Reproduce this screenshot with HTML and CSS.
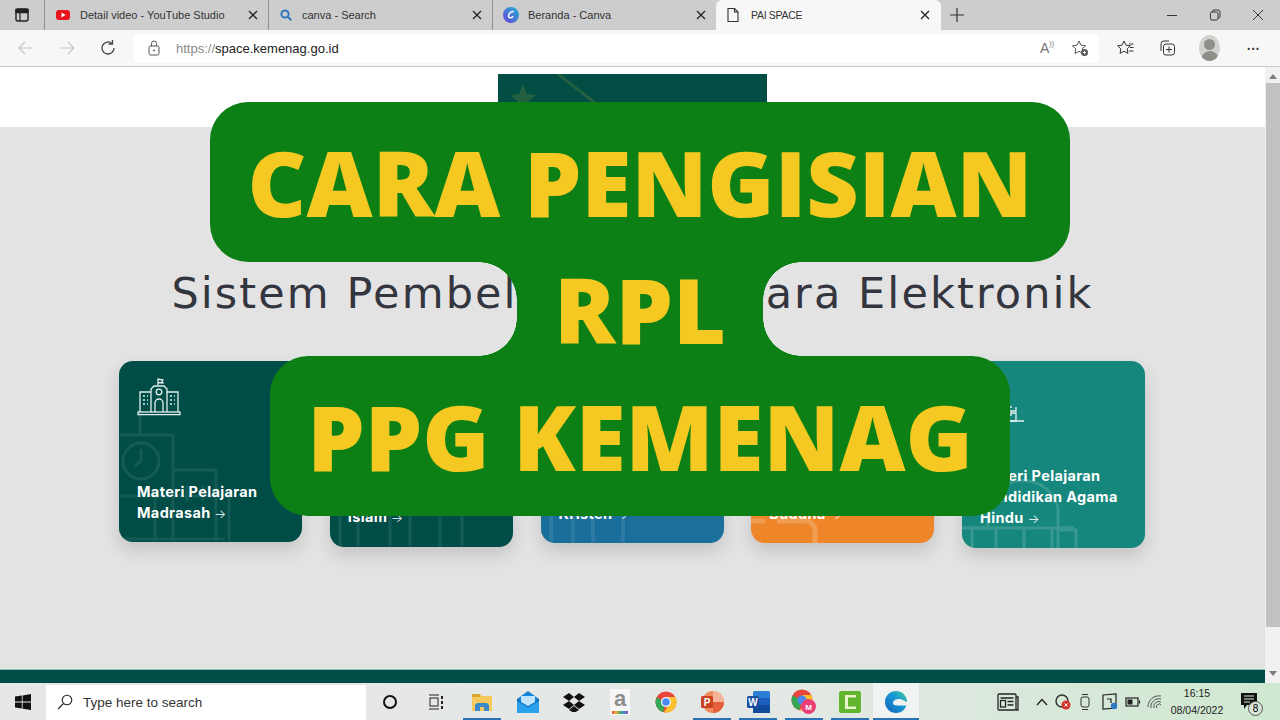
FILE: index.html
```html
<!DOCTYPE html>
<html>

<head>
    <title>PAI SPACE</title>
    <meta name="viewport" content="width=device-width, initial-scale=1.0">
    <link rel="stylesheet" href="styles.css">
</head>

<body>
    <!-- Browser tabs -->
    <div class="tabstrip">
        <div class="tab-actions">
            <svg width="16" height="16" viewBox="0 0 16 16" fill="none" stroke="#222" stroke-width="1.4">
                <rect x="2" y="2" width="12" height="12" rx="2"></rect>
                <path d="M2 5.5h12M6 5.5V14" stroke-width="1.2"></path>
                <path d="M2 2.5h12v3H2z" fill="#222"></path>
            </svg>
        </div>
        <div class="tab">
            <svg class="favicon" width="16" height="16" viewBox="0 0 16 16">
                <rect x="1" y="3" width="14" height="10" rx="3" fill="#e8141c"></rect>
                <path d="M6.5 5.6v4.8L10.6 8z" fill="#fff"></path>
            </svg>
            <span class="tab-title">Detail video - YouTube Studio</span>
            <svg class="tab-close" width="10" height="10" viewBox="0 0 10 10" stroke="#222" stroke-width="1.3"><path d="M1 1l8 8M9 1L1 9"></path></svg>
        </div>
        <div class="tab">
            <svg class="favicon" width="14" height="14" viewBox="0 0 14 14" fill="none" stroke="#2f75bb" stroke-width="2">
                <circle cx="6" cy="6" r="3.6"></circle>
                <path d="M8.8 8.8L12.4 12.4"></path>
            </svg>
            <span class="tab-title">canva - Search</span>
            <svg class="tab-close" width="10" height="10" viewBox="0 0 10 10" stroke="#222" stroke-width="1.3"><path d="M1 1l8 8M9 1L1 9"></path></svg>
        </div>
        <div class="tab tab-last">
            <svg class="favicon" width="16" height="16" viewBox="0 0 16 16">
                <defs>
                    <linearGradient id="canva" x1="0" y1="1" x2="1" y2="0">
                        <stop offset="0" stop-color="#6b3fd8"></stop>
                        <stop offset="1" stop-color="#1fb6d4"></stop>
                    </linearGradient>
                </defs>
                <circle cx="8" cy="8" r="8" fill="url(#canva)"></circle>
                <path d="M10.6 5.2C9.6 3.6 6.2 5.4 5.6 8.4c-.5 2.6 2 3.2 4.6 1" fill="none" stroke="#fff" stroke-width="1.4"></path>
            </svg>
            <span class="tab-title">Beranda - Canva</span>
            <svg class="tab-close" width="10" height="10" viewBox="0 0 10 10" stroke="#222" stroke-width="1.3"><path d="M1 1l8 8M9 1L1 9"></path></svg>
        </div>
        <div class="tab tab-active">
            <svg class="favicon" width="16" height="16" viewBox="0 0 16 16" fill="none" stroke="#333" stroke-width="1.1">
                <path d="M3 1.5h6.5L13 5v9.5H3z"></path>
                <path d="M9.5 1.5V5H13"></path>
            </svg>
            <span class="tab-title">PAI SPACE</span>
            <svg class="tab-close" width="10" height="10" viewBox="0 0 10 10" stroke="#222" stroke-width="1.3"><path d="M1 1l8 8M9 1L1 9"></path></svg>
        </div>
        <svg class="new-tab" width="14" height="14" viewBox="0 0 14 14" stroke="#333" stroke-width="1.2"><path d="M7 0v14M0 7h14"></path></svg>
        <div class="window-controls">
            <svg width="12" height="12" viewBox="0 0 12 12" stroke="#333" stroke-width="1"><path d="M1 6.5h10"></path></svg>
            <svg width="12" height="12" viewBox="0 0 12 12" fill="none" stroke="#333" stroke-width="1"><rect x="1.5" y="3" width="7.5" height="8" rx="1.5"></rect><path d="M3.5 3V2.5A1.5 1.5 0 0 1 5 1h4a2 2 0 0 1 2 2v4.500A1.500 1.500 0 0 1 9 9"></path></svg>
            <svg width="12" height="12" viewBox="0 0 12 12" stroke="#333" stroke-width="1"><path d="M1 1l10 10M11 1L1 11"></path></svg>
        </div>
    </div>

    <!-- Address bar -->
    <div class="toolbar">
        <svg class="nav-icon" width="18" height="18" viewBox="0 0 18 18" fill="none" stroke="#c6c6c6" stroke-width="1.2"><path d="M16 9H2M8 3L2 9l6 6"></path></svg>
        <svg class="nav-icon" width="18" height="18" viewBox="0 0 18 18" fill="none" stroke="#c6c6c6" stroke-width="1.2"><path d="M2 9h14M10 3l6 6-6 6"></path></svg>
        <svg class="nav-icon" width="18" height="18" viewBox="0 0 18 18" fill="none" stroke="#444" stroke-width="1.3"><path d="M15 9a6 6 0 1 1-2-4.500"></path><path d="M13.500 1v4h-4"></path></svg>
        <div class="address">
            <svg class="lock" width="12" height="16" viewBox="0 0 12 16" fill="none" stroke="#555" stroke-width="1"><rect x="1" y="6" width="10" height="9" rx="1.500"></rect><path d="M3.500 6V3.500a2.500 2.500 0 0 1 5 0V6"></path><circle cx="6" cy="10.500" r=".6" fill="#555"></circle></svg>
            <span class="url"><span class="url-scheme">https://</span>space.kemenag.go.id</span>
            <div class="address-icons">
                <span class="read-aloud">A<small>))</small></span>
                <svg width="18" height="18" viewBox="0 0 18 18" fill="none" stroke="#555" stroke-width="1"><path d="M8 2l2 4.200 4.500.6-3.300 3.100.8 4.600L8 12.300 4 14.500l.8-4.600L1.500 6.800 6 6.200z"></path><circle cx="13.500" cy="13.500" r="3.500" fill="#555" stroke="none"></circle><path d="M13.500 11.800v3.400M11.800 13.500h3.400" stroke="#fff"></path></svg>
            </div>
        </div>
        <div class="toolbar-icons">
            <svg width="18" height="18" viewBox="0 0 18 18" fill="none" stroke="#333" stroke-width="1"><path d="M7 2l2 4.200 4.300.6-3.100 3 .7 4.600L7 12.200 3.100 14.400l.7-4.600-3.100-3L5 6.200z"></path><path d="M12 5h4.500M13 8.500h3.500M12 12h4.500"></path></svg>
            <svg width="18" height="18" viewBox="0 0 18 18" fill="none" stroke="#333" stroke-width="1"><path d="M3 12V5a3 3 0 0 1 3-3h5"></path><rect x="5.500" y="5" width="11" height="11" rx="2.500"></rect><path d="M11 7.500v6M8 10.500h6"></path></svg>
            <div class="avatar"><span class="avatar-head"></span><span class="avatar-body"></span></div>
            <span class="dots">&#8226;&#8226;&#8226;</span>
        </div>
    </div>

    <div class="viewport">
        <div class="page">
            <header class="site-header">
                <div class="logo">
                    <svg width="269" height="53" viewBox="0 0 269 53" fill="none" stroke="#23603f" stroke-width="3">
                        <path d="M25 10l4 10 9 1-7 6 2 10-8-6-8 6 2-10-7-6 9-1z" fill="#23603f" stroke="none"></path>
                        <path d="M55 -4L106 36"></path>
                    </svg>
                </div>
            </header>

            <main class="site-main">
                <h1 class="site-title">Sistem Pembelajaran Secara Elektronik</h1>
                <div class="cards">
                    <a class="card card-madrasah">
                        <svg class="card-art" width="183" height="181" viewBox="0 0 183 181" fill="none" stroke="#fff" stroke-width="3">
                            <path d="M21 50v24M0 74h54v35h43v71M54 74v106M-2 178h108"></path>
                            <circle cx="22" cy="100" r="18"></circle>
                            <path d="M22 88v12l-6 5M68 125v15M84 125v15"></path>
                            <path d="M0 135h110v45M36 135v45"></path>
                        </svg>
                        <svg class="card-icon" width="44" height="38" viewBox="0 0 44 38" fill="none" stroke="#e4f0ee" stroke-width="1.300">
                            <path d="M21 7V1l5 1-1 1.500 1 1.500-5-.5"></path>
                            <path d="M14 34V11l3-3h10l3 3v23"></path>
                            <circle cx="22" cy="14" r="2.800"></circle>
                            <path d="M18 34v-9a4 4 0 0 1 8 0v9"></path>
                            <path d="M14 14H3v20M30 14h11v20"></path>
                            <path d="M6 18h2M10 18h1M6 22h2M10 22h1M6 26h2M10 26h1M33 18h2M37 18h1M33 22h2M37 22h1M33 26h2M37 26h1"></path>
                            <rect x="1" y="34" width="42" height="2.600"></rect>
                        </svg>
                        <span class="card-label">Materi Pelajaran Madrasah <span class="arrow">&#8594;</span></span>
                    </a>
                    <a class="card card-islam">
                        <svg class="card-art" width="183" height="186" viewBox="0 0 183 186" fill="none" stroke="#fff" stroke-width="3">
                            <path d="M10 150v36M28 140v46M60 140v46M80 140v46M110 140v46M132 150v36"></path>
                        </svg>
                        <span class="card-label">Materi Pelajaran Pendidikan Agama Islam <span class="arrow">&#8594;</span></span>
                    </a>
                    <a class="card card-kristen">
                        <svg class="card-art" width="183" height="182" viewBox="0 0 183 182" fill="none" stroke="#fff" stroke-width="4">
                            <path d="M10 140v42M32 140v42M52 140v42M82 140v42"></path>
                        </svg>
                        <span class="card-label">Materi Pelajaran Pendidikan Agama Kristen <span class="arrow">&#8594;</span></span>
                    </a>
                    <a class="card card-buddha">
                        <svg class="card-art" width="183" height="182" viewBox="0 0 183 182" fill="none" stroke="#fff" stroke-width="5">
                            <path d="M0 160h14M26 160h30a10 10 0 0 1 8 10v12"></path>
                        </svg>
                        <span class="card-label">Materi Pelajaran Pendidikan Agama Buddha <span class="arrow">&#8594;</span></span>
                    </a>
                    <a class="card card-hindu">
                        <svg class="card-art" width="183" height="187" viewBox="0 0 183 187" fill="none" stroke="#fff" stroke-width="3">
                            <path d="M10 187v-20h16v-20a36 36 0 0 1 70 0v20h16M34 167v20M62 167v20M90 167v20"></path>
                            <path d="M96 187v-18h18v18M0 167h112"></path>
                        </svg>
                        <svg class="card-icon card-icon-hindu" width="44" height="38" viewBox="0 0 44 38" fill="none" stroke="#e4f0ee" stroke-width="1.300">
                            <path d="M18 14h12M20 14l-2 6h12M32 20h-14v4h18v-4M31 26h5v8H22v-6h9z"></path>
                            <path d="M4 34h40"></path>
                        </svg>
                        <span class="card-label">Materi Pelajaran Pendidikan Agama Hindu <span class="arrow">&#8594;</span></span>
                    </a>
                </div>
            </main>

            <footer class="site-footer"></footer>
        </div>

        <div class="scrollbar">
            <span class="scroll-arrow scroll-up"></span>
            <span class="scroll-thumb"></span>
            <span class="scroll-arrow scroll-down"></span>
        </div>
    </div>

    <!-- Windows taskbar -->
    <div class="taskbar">
        <div class="start">
            <svg width="16" height="16" viewBox="0 0 16 16" fill="#111"><path d="M0 2.500l6.800-1v6H0zM7.600 1.400L16 0v7.500H7.600zM0 8.400h6.800v6.100L0 13.500zM7.600 8.400H16V16l-8.400-1.300z"></path></svg>
        </div>
        <div class="search">
            <svg width="16" height="16" viewBox="0 0 16 16" fill="none" stroke="#222" stroke-width="1.100"><circle cx="10" cy="6" r="4.800"></circle><path d="M6.500 9.500L1 15"></path></svg>
            <span>Type here to search</span>
        </div>
        <div class="task-items">
            <span class="task-item">
                <svg width="16" height="16" viewBox="0 0 16 16" fill="none" stroke="#111" stroke-width="2"><circle cx="8" cy="8" r="6"></circle></svg>
            </span>
            <span class="task-item">
                <svg width="18" height="18" viewBox="0 0 18 18" fill="none" stroke="#222" stroke-width="1"><path d="M2 2h10M2 16h10"></path><rect x="3" y="5" width="8" height="8"></rect><path d="M15 3v3M15 8v3M15 13v3" stroke-width="2"></path></svg>
            </span>
            <span class="task-item task-open">
                <svg width="22" height="20" viewBox="0 0 22 20"><path d="M1 2h8l2 2h10v15H1z" fill="#f5c95c"></path><path d="M1 2h8v3H1z" fill="#d9a72f"></path><path d="M6 11h10l2 2v6H4v-6z" fill="#3a8bc9"></path><path d="M9 15h4v4H9z" fill="#f5c95c"></path></svg>
            </span>
            <span class="task-item">
                <svg width="24" height="24" viewBox="0 0 24 24"><path d="M1 9L12 1l11 8v14H1z" fill="#1184d8"></path><path d="M1 9l11 8 11-8v1l-11 7L1 10z" fill="#0d5fa8"></path><path d="M5 6h14v6l-7 4-7-4z" fill="#bfe5fa"></path><path d="M1 11l11 7 11-7v12H1z" fill="#2ba3ec"></path></svg>
            </span>
            <span class="task-item">
                <svg width="22" height="20" viewBox="0 0 22 20" fill="#111"><path d="M6 1L0 5l6 4 5-4zM16 1l-5 4 5 4 6-4zM0 13l6 4 5-4-5-4zM16 9l-5 4 5 4 6-4zM6 18l5 3 5-3-5-4z"></path></svg>
            </span>
            <span class="task-item">
                <span class="amazon">a<i></i></span>
            </span>
            <span class="task-item">
                <svg width="22" height="22" viewBox="0 0 22 22"><circle cx="11" cy="11" r="10.500" fill="#e8453c"></circle><path d="M11 11L1.500 6.500A10.500 10.500 0 0 0 8 21z" fill="#36a853"></path><path d="M11 6h9.200A10.500 10.500 0 0 1 9 21.300L14 13z" fill="#fbc02d"></path><circle cx="11" cy="11" r="5" fill="#fff"></circle><circle cx="11" cy="11" r="3.800" fill="#4a8af4"></circle></svg>
            </span>
            <span class="task-item task-open">
                <svg width="24" height="22" viewBox="0 0 24 22"><circle cx="13" cy="11" r="11" fill="#f08a5d"></circle><path d="M13 0a11 11 0 0 1 11 11H13z" fill="#f4b49a"></path><path d="M13 11h11a11 11 0 0 1-11 11z" fill="#e65f3a"></path><rect x="1" y="5" width="12" height="12" rx="1.500" fill="#c8421f"></rect><text class="app-letter" x="7" y="14.500" text-anchor="middle">P</text></svg>
            </span>
            <span class="task-item task-open">
                <svg width="24" height="22" viewBox="0 0 24 22"><rect x="7" y="0" width="17" height="22" rx="1.500" fill="#2b7cd3"></rect><path d="M7 14h17v8H7z" fill="#124a9c"></path><path d="M7 7h17v7H7z" fill="#1b5ebe"></path><rect x="1" y="5" width="12" height="12" rx="1.500" fill="#1a4ea0"></rect><text class="app-letter" x="7" y="14.500" text-anchor="middle">W</text></svg>
            </span>
            <span class="task-item task-open">
                <svg width="26" height="26" viewBox="0 0 26 26"><circle cx="11" cy="11" r="10.500" fill="#e8453c"></circle><path d="M11 11L1.500 6.500A10.500 10.500 0 0 0 8 21z" fill="#36a853"></path><path d="M11 6h9.200A10.500 10.500 0 0 1 9 21.300L14 13z" fill="#fbc02d"></path><circle cx="11" cy="11" r="4.500" fill="#4a8af4"></circle><circle cx="17.500" cy="17.500" r="7.500" fill="#ea3f78"></circle><text class="app-letter app-letter-m" x="17.500" y="20.500" text-anchor="middle">M</text></svg>
            </span>
            <span class="task-item task-open">
                <svg width="22" height="22" viewBox="0 0 22 22"><rect width="22" height="22" rx="2" fill="#62b52c"></rect><path d="M6 4h11v2.500H9v9h8V18H6z" fill="#e8f5c8"></path></svg>
            </span>
            <span class="task-item task-open task-active">
                <svg width="22" height="22" viewBox="0 0 22 22">
                    <defs>
                        <linearGradient id="edge" x1="0" y1="1" x2="1" y2="0">
                            <stop offset="0" stop-color="#0f62b8"></stop>
                            <stop offset="0.6" stop-color="#1a9bd8"></stop>
                            <stop offset="1" stop-color="#43d08a"></stop>
                        </linearGradient>
                    </defs>
                    <circle cx="11" cy="11" r="11" fill="url(#edge)"></circle>
                    <path d="M8 11.500c.5-3.500 7-5 11-2 1.500 1 3 1.500 3 1.500v3.500H12c-2.500 0-4.200-1-4-3z" fill="#f0f3f1"></path>
                </svg>
            </span>
        </div>
        <div class="tray">
            <svg class="tray-news" width="22" height="18" viewBox="0 0 22 18" fill="none" stroke="#222" stroke-width="1.300"><rect x="1" y="1" width="18" height="16" rx="1"></rect><path d="M19 4h2v13h-2"></path><path d="M3.500 5h13M10.500 8.500h6M10.500 12h6"></path><rect x="3.500" y="7.500" width="5" height="6.500"></rect></svg>
            <svg class="tray-caret" width="12" height="8" viewBox="0 0 12 8" fill="none" stroke="#222" stroke-width="1.300"><path d="M1 7l5-5.500L11 7"></path></svg>
            <svg width="18" height="18" viewBox="0 0 18 18"><circle cx="8" cy="8" r="6" fill="none" stroke="#333" stroke-width="1.500"></circle><circle cx="12" cy="12" r="4.500" fill="#d9342b"></circle><path d="M10.500 10.500l3 3M13.500 10.500l-3 3" stroke="#fff"></path></svg>
            <svg class="tray-meet" width="14" height="18" viewBox="0 0 14 18" fill="none" stroke="#333" stroke-width="1"><rect x="3" y="4" width="8" height="10" rx="2"></rect><path d="M4 1.500h6M4 16.500h6"></path></svg>
            <svg width="18" height="18" viewBox="0 0 18 18" fill="none" stroke="#222" stroke-width="1.200"><path d="M2 2l13-1v14L2 16z"></path><path d="M6 6h4v4"></path><circle cx="13" cy="13" r="3.200" fill="#2f79c8" stroke="none"></circle></svg>
            <svg width="16" height="10" viewBox="0 0 16 10" fill="none" stroke="#222" stroke-width="1.200"><rect x="1" y="1" width="12" height="8"></rect><rect x="2.500" y="2.500" width="5" height="5" fill="#222" stroke="none"></rect><path d="M14.500 3.500v3"></path></svg>
            <svg width="16" height="16" viewBox="0 0 16 16" fill="none" stroke="#555" stroke-width="1"><path d="M1 13A11 11 0 0 1 14 2M4 14a8 8 0 0 1 10-9M7 14a5 5 0 0 1 7-6M10 14a2 2 0 0 1 4-3"></path></svg>
        </div>
        <div class="clock"><span>16:15</span><span>08/04/2022</span></div>
        <div class="notify">
            <svg width="16" height="18" viewBox="0 0 16 18" fill="#111"><path d="M0 0h16v12H6l-3 4v-4H0z"></path><path d="M3 3h10M3 6h10M3 9h6" stroke="#e0ece0" stroke-width="1"></path></svg>
            <span class="notify-count">8</span>
        </div>
    </div>

    <!-- Video title banner on top of the page -->
    <div class="banner">
        <div class="banner-row banner-top">CARA PENGISIAN</div>
        <div class="banner-row banner-mid">RPL</div>
        <div class="banner-row banner-bottom">PPG KEMENAG</div>
    </div>
</body>

</html>
```

FILE: styles.css
```css
* {
    box-sizing: border-box;
}

html,
body {
    margin: 0;
    padding: 0;
}

body {
    position: relative;
    display: flex;
    flex-direction: column;
    width: 1280px;
    height: 720px;
    overflow: hidden;
    font-family: "Noto Sans", sans-serif;
    background-color: #e3e3e3;
}

svg {
    display: block;
    flex-shrink: 0;
}

/* Tabs */
.tabstrip {
    display: flex;
    align-items: stretch;
    height: 30px;
    background-color: #cdcdcd;
}

.tab-actions {
    display: flex;
    align-items: center;
    justify-content: center;
    width: 44px;
}

.tab {
    display: flex;
    align-items: center;
    width: 224px;
    padding: 0 10px;
    color: #333;
    border-left: 1px solid #8f8f8f;
}

.tab .favicon {
    margin-right: 9px;
}

.tab-title {
    flex: 1;
    white-space: nowrap;
    overflow: hidden;
    font-family: "Liberation Sans", sans-serif;
    font-size: 11px;
}

.tab-active {
    width: 225px;
    padding: 0 11px 0 9px;
    background-color: #f7f7f7;
    border-left: none;
    border-radius: 6px 6px 0 0;
}

.tab-active .favicon {
    margin-right: 10px;
}

.tab-active .tab-title {
    font-size: 10.5px;
    letter-spacing: -0.3px;
}

.new-tab {
    align-self: center;
    margin-left: 9px;
}

.window-controls {
    display: flex;
    align-items: center;
    margin-left: auto;
    gap: 31px;
    padding-right: 16px;
}

/* Address bar */
.toolbar {
    display: flex;
    align-items: center;
    height: 37px;
    background-color: #f7f7f7;
    border-bottom: 1px solid #c9c9c9;
    padding-left: 17px;
}

.nav-icon {
    margin-right: 23px;
}

.address {
    display: flex;
    align-items: center;
    width: 965px;
    height: 29px;
    margin-left: -6px;
    padding: 0 10px 0 14px;
    background-color: white;
    border-radius: 4px;
}

.lock {
    margin-right: 16px;
}

.url {
    font-family: "Liberation Sans", sans-serif;
    font-size: 13px;
    color: #222;
}

.url-scheme {
    color: #8a8a8a;
}

.address-icons {
    display: flex;
    align-items: center;
    gap: 17px;
    margin-left: auto;
}

.read-aloud {
    font-family: "Liberation Sans", sans-serif;
    font-size: 14px;
    color: #777;
}

.read-aloud small {
    font-size: 7px;
    vertical-align: top;
}

.toolbar-icons {
    display: flex;
    align-items: center;
    gap: 23px;
    padding-left: 18px;
}

.avatar {
    position: relative;
    width: 21px;
    height: 26px;
    border-radius: 50%;
    overflow: hidden;
    background-color: #d2d2ce;
    display: flex;
    flex-direction: column;
    align-items: center;
    padding-top: 4px;
}

.avatar-head {
    width: 11px;
    height: 11px;
    border-radius: 50%;
    background-color: #8f8f89;
}

.avatar-body {
    width: 18px;
    height: 10px;
    margin-top: 1px;
    border-radius: 9px 9px 0 0;
    background-color: #8f8f89;
}

.dots {
    font-size: 9px;
    letter-spacing: 1px;
    color: #333;
    margin-left: 4px;
}

/* Page */
.viewport {
    flex: 1;
    display: flex;
    min-height: 0;
}

.page {
    flex: 1;
    display: flex;
    flex-direction: column;
}

.site-header {
    display: flex;
    justify-content: center;
    height: 60px;
    background-color: white;
    padding-top: 7px;
}

.logo {
    width: 269px;
    height: 53px;
    background-color: #024d44;
    overflow: hidden;
}

.site-main {
    flex: 1;
    background-color: #e3e3e3;
    padding-top: 141px;
}

.site-title {
    margin: 0 0 43px;
    text-align: center;
    font-family: "DejaVu Sans", sans-serif;
    font-size: 43px;
    line-height: 50px;
    font-weight: 400;
    letter-spacing: 2.1px;
    color: #33353f;
    white-space: nowrap;
}

.cards {
    display: flex;
    align-items: flex-start;
    justify-content: center;
    gap: 27.75px;
    margin-right: 1px;
}

.card {
    position: relative;
    display: flex;
    flex-direction: column;
    width: 183px;
    height: 182px;
    padding: 17px 18px 18px;
    border-radius: 14px;
    overflow: hidden;
    color: white;
    box-shadow: 0 8px 18px rgba(0, 0, 0, 0.14);
}

.card-madrasah {
    height: 181px;
    background-color: #004d47;
}

.card-islam {
    height: 186px;
    padding-bottom: 19px;
    background-color: #004d47;
}

.card-kristen {
    background-color: #1b6f9b;
}

.card-buddha {
    background-color: #ee8528;
}

.card-hindu {
    height: 187px;
    padding-bottom: 19px;
    background-color: #16877d;
}

.card-art {
    position: absolute;
    left: 0;
    top: 0;
    opacity: 0.08;
}

.card-hindu .card-art {
    opacity: 0.14;
}

.card-buddha .card-art {
    opacity: 0.2;
}

.card-icon-hindu {
    margin-top: 9px;
}

.card-label {
    position: relative;
    margin-top: auto;
    font-family: Inter, sans-serif;
    font-size: 14.5px;
    line-height: 21px;
    font-weight: 700;
    letter-spacing: 0.35px;
}

.arrow {
    font-size: 12.5px;
    font-weight: 300;
}

.site-footer {
    height: 14px;
    background-color: #004d47;
    border-top: 1px solid #8fc4bd;
}

.scrollbar {
    position: relative;
    display: flex;
    flex-direction: column;
    align-items: center;
    width: 15px;
    background-color: #f1f1f1;
}

.scroll-thumb {
    width: 14px;
    height: 544px;
    margin-top: 4px;
    background-color: #c1c1c1;
}

.scroll-arrow {
    width: 0;
    height: 0;
    border-left: 4px solid transparent;
    border-right: 4px solid transparent;
}

.scroll-up {
    margin-top: 7px;
    border-bottom: 5px solid #7d7d7d;
}

.scroll-down {
    margin-top: 44px;
    border-top: 5px solid #7d7d7d;
}

/* Taskbar */
.taskbar {
    display: flex;
    align-items: center;
    height: 37px;
    background: linear-gradient(90deg, #e6e8e7 0%, #e4e8e5 60%, #cfe8d0 100%);
}

.start {
    display: flex;
    justify-content: center;
    width: 46px;
}

.search {
    display: flex;
    align-items: center;
    gap: 10px;
    width: 320px;
    height: 35px;
    margin-top: 1px;
    padding-left: 11px;
    background-color: white;
    font-size: 13.5px;
    color: #333;
    font-family: "Liberation Sans", sans-serif;
}

.task-items {
    display: flex;
    height: 100%;
    margin-left: 1px;
}

.task-item {
    display: flex;
    align-items: center;
    justify-content: center;
    width: 46px;
    height: 100%;
}

.task-open {
    background-image: linear-gradient(#2a72b5, #2a72b5);
    background-repeat: no-repeat;
    background-position: center bottom;
    background-size: 38px 2px;
}

.task-active {
    background-color: #f0f3f1;
    background-size: 100% 2px;
}

.amazon {
    display: flex;
    flex-direction: column;
    align-items: center;
    width: 20px;
    height: 26px;
    background-color: #f6f6f6;
    font-family: "Liberation Sans", sans-serif;
    font-size: 22px;
    line-height: 20px;
    font-weight: 700;
    color: #8d8d8d;
}

.amazon i {
    width: 16px;
    height: 3px;
    margin-top: 2px;
    background: linear-gradient(90deg, #e2483d, #f2b33b, #49a85a, #3f86d6, #a04fc0);
}

.app-letter {
    font-family: "Liberation Sans", sans-serif;
    font-size: 10px;
    font-weight: 700;
    fill: white;
}

.app-letter-m {
    font-size: 8px;
}

.tray {
    display: flex;
    align-items: center;
    gap: 6px;
    margin-left: auto;
}

.tray-news {
    margin-right: 11px;
}

.tray-meet {
    margin-right: 3px;
}

.clock {
    display: flex;
    flex-direction: column;
    align-items: center;
    gap: 4px;
    width: 60px;
    margin-left: 4px;
    font-family: "Liberation Sans", sans-serif;
    font-size: 10.5px;
    line-height: 13px;
    color: #222;
}

.notify {
    position: relative;
    width: 46px;
    margin-left: 7px;
    padding-left: 7px;
}

.notify-count {
    position: absolute;
    left: 14px;
    top: 8px;
    width: 15px;
    height: 15px;
    border: 1px solid #555;
    border-radius: 50%;
    background-color: #d8e4d8;
    font-family: "Liberation Sans", sans-serif;
    font-size: 10px;
    line-height: 13px;
    text-align: center;
}

/* Banner over the page */
.banner {
    position: absolute;
    top: 102px;
    left: 0;
    right: 0;
    display: flex;
    flex-direction: column;
    align-items: center;
    font-family: "Open Sans", sans-serif;
    font-weight: 800;
    font-size: 91px;
    color: #f5c922;
}

.banner-row {
    display: flex;
    align-items: center;
    justify-content: center;
    background-color: #0c8015;
    white-space: nowrap;
}

.banner-top {
    width: 860px;
    height: 160px;
    border-radius: 38px;
}

.banner-mid {
    position: relative;
    width: 246px;
    height: 94px;
}

.banner-mid::before,
.banner-mid::after {
    content: "";
    position: absolute;
    top: 0;
    bottom: 0;
    width: 38px;
    background-repeat: no-repeat;
    background-size: 38px 38px;
}

.banner-mid::before {
    left: -38px;
    background-image:
        radial-gradient(circle at 0 100%, transparent 37.5px, #0c8015 38px),
        radial-gradient(circle at 0 0, transparent 37.5px, #0c8015 38px);
    background-position: top, bottom;
}

.banner-mid::after {
    right: -38px;
    background-image:
        radial-gradient(circle at 100% 100%, transparent 37.5px, #0c8015 38px),
        radial-gradient(circle at 100% 0, transparent 37.5px, #0c8015 38px);
    background-position: top, bottom;
}

.banner-bottom {
    width: 740px;
    height: 160px;
    border-radius: 38px;
}
```
